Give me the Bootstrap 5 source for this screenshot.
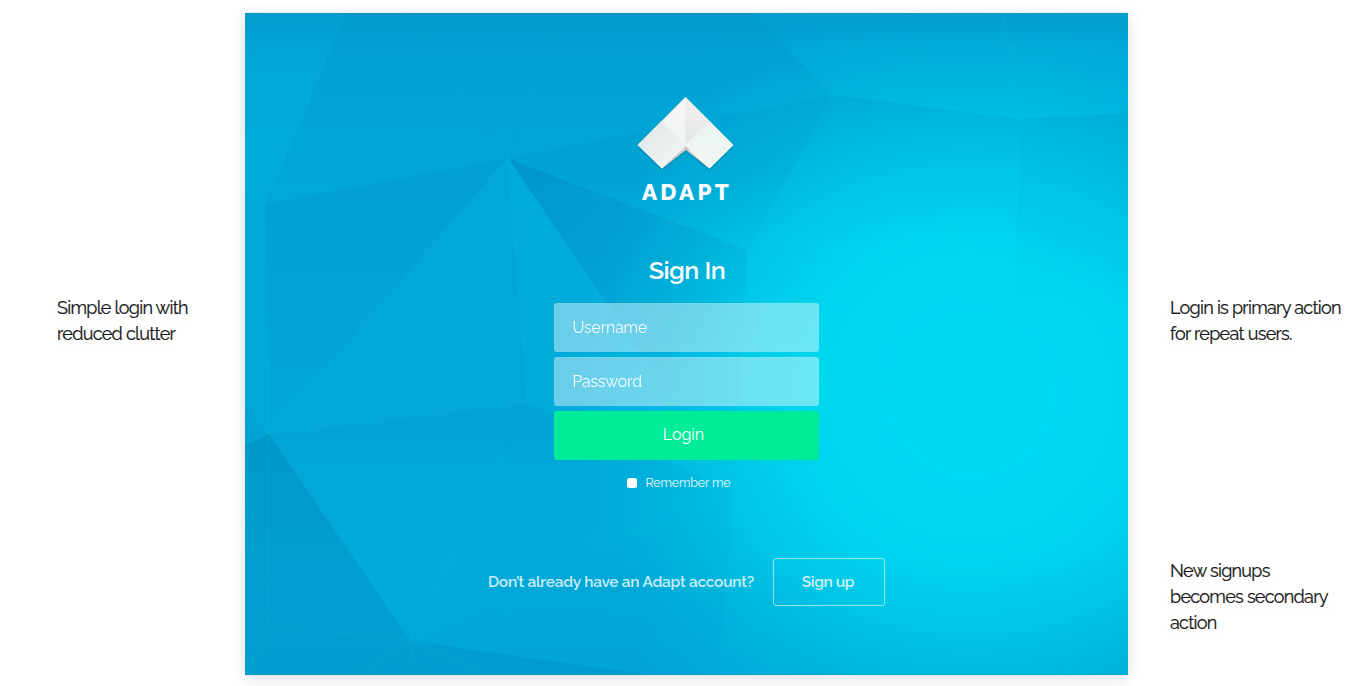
<!DOCTYPE html>
<html lang="en">
<head>
<meta charset="utf-8">
<meta name="viewport" content="width=device-width, initial-scale=1">
<title>Adapt – Sign In</title>
<link href="https://cdn.jsdelivr.net/npm/bootstrap@5.3.0/dist/css/bootstrap.min.css" rel="stylesheet">
<style>
body{font-family:Raleway,Lato,sans-serif;background:#fff;color:#161616;height:686px;overflow:hidden}
.stage{padding-top:13px}
.note{font-size:18px;line-height:26px;letter-spacing:-.71px;-webkit-text-stroke:.2px #161616;text-shadow:0 6px 14px rgba(0,0,0,.08)}
.note-left{width:245px;padding:282px 0 0 57px}
.note-right{width:243px;padding:282px 0 0 42px}
.note-right p + p{margin-top:211px}
.screen{width:883px;height:662px;background:#00a8da;box-shadow:0 3px 14px rgba(0,0,0,.13);color:#fff}
.backdrop{left:0;top:0;width:883px;height:662px;z-index:0}
.panel{width:265px;margin:83px 1px 0 0}
.logo{width:104px;height:82px}
.brand{font-size:22.5px;font-weight:800;line-height:26px;letter-spacing:3.3px;margin:1px -2px 0 0}
.panel h1{font-size:25px;font-weight:600;line-height:30px;margin:50px 0 18px 2px;letter-spacing:-.5px}
.panel .form-control{height:49px;margin-bottom:5px;padding:0 18px 1px;border:1px solid rgba(255,255,255,.06);border-radius:3px;background:rgba(255,255,255,.42);color:#fff;font-size:15.8px;letter-spacing:-.15px}
.panel .form-control::placeholder{color:#fff;opacity:.92}
.btn-login{height:49px;border:0;border-radius:3px;background:#00ec98;color:#fff;font-size:16px;padding:0 5px 2px 0}
.remember{font-size:12.5px;line-height:16px;margin-top:15px;padding-right:14px;letter-spacing:-.15px;color:rgba(255,255,255,.95)}
.remember .form-check-input{width:10px;height:10px;margin:0 8px 0 0;border:0;border-radius:2.5px;background:#fff}
.signup{margin-top:67px;font-size:15.5px;font-weight:600;letter-spacing:-.25px;color:rgba(255,255,255,.8)}
.btn-signup{width:112px;height:48px;border:1px solid rgba(255,255,255,.55);border-radius:3px;color:rgba(255,255,255,.82);font-size:15.5px;font-weight:600;letter-spacing:-.4px;padding:0 2px 0 0;margin-left:19px}
</style>
</head>
<body>
<main class="stage d-flex align-items-start">
  <aside class="note note-left flex-shrink-0"><p class="mb-0">Simple login with<br>reduced clutter</p></aside>

  <section class="screen position-relative flex-shrink-0 d-flex flex-column align-items-center">
    <svg class="backdrop position-absolute" viewBox="245 13 883 662" aria-hidden="true">
      <defs>
        <radialGradient id="glow" gradientUnits="userSpaceOnUse" cx="970" cy="395" r="440">
          <stop offset="0" stop-color="#00dbf2"/><stop offset=".32" stop-color="#00d8f0"/>
          <stop offset=".5" stop-color="#00cdea"/><stop offset=".7" stop-color="#00b9e0"/>
          <stop offset=".9" stop-color="#00abda"/><stop offset="1" stop-color="#00aada"/>
        </radialGradient>
        <linearGradient id="fall" x1="0" y1="0" x2="0" y2="1">
          <stop offset="0" stop-color="#0080b4" stop-opacity=".32"/><stop offset="1" stop-color="#0080b4" stop-opacity=".06"/>
        </linearGradient>
        <linearGradient id="soft" x1="0" y1="0" x2="0" y2="1">
          <stop offset="0" stop-color="#0088bc" stop-opacity=".17"/><stop offset=".7" stop-color="#0088bc" stop-opacity="0"/>
        </linearGradient>
        <linearGradient id="west" x1="0" y1="0" x2="0" y2="1">
          <stop offset="0" stop-color="#0088bc" stop-opacity=".3"/><stop offset=".5" stop-color="#0088bc" stop-opacity=".17"/><stop offset="1" stop-color="#0088bc" stop-opacity=".1"/>
        </linearGradient>
        <linearGradient id="north" gradientUnits="userSpaceOnUse" x1="0" y1="13" x2="0" y2="204">
          <stop offset="0" stop-color="#0088bc" stop-opacity=".18"/><stop offset="1" stop-color="#0088bc" stop-opacity=".1"/>
        </linearGradient>
        <linearGradient id="ridge" x1="0" y1="0" x2="0" y2="1">
          <stop offset="0" stop-color="#0080b4" stop-opacity=".22"/><stop offset=".5" stop-color="#0080b4" stop-opacity=".18"/><stop offset="1" stop-color="#0080b4" stop-opacity="0"/>
        </linearGradient>
        <linearGradient id="faint" x1="0" y1="0" x2="0" y2="1">
          <stop offset="0" stop-color="#008cc0" stop-opacity=".2"/><stop offset=".7" stop-color="#008cc0" stop-opacity="0"/>
        </linearGradient>
        <linearGradient id="roof" x1="0" y1="0" x2="0" y2="1">
          <stop offset="0" stop-color="#0086b8" stop-opacity=".4"/><stop offset=".3" stop-color="#0086b8" stop-opacity=".13"/><stop offset="1" stop-color="#0086b8" stop-opacity="0"/>
        </linearGradient>
        <linearGradient id="floor" x1="0" y1="0" x2="0" y2="1">
          <stop offset="0" stop-color="#0092c0" stop-opacity="0"/><stop offset="1" stop-color="#0092c0" stop-opacity=".13"/>
        </linearGradient>
        <linearGradient id="wedge" gradientUnits="userSpaceOnUse" x1="515" y1="160" x2="705" y2="370">
          <stop offset="0" stop-color="#0080b8" stop-opacity=".46"/><stop offset=".55" stop-color="#0080b8" stop-opacity=".22"/><stop offset="1" stop-color="#0080b8" stop-opacity=".02"/>
        </linearGradient>
      </defs>
      <rect x="245" y="13" width="883" height="662" fill="url(#glow)"/>
      <rect x="245" y="13" width="883" height="120" fill="url(#roof)"/>
      <rect x="245" y="555" width="883" height="120" fill="url(#floor)"/>
      <path d="M345 13H557L508 158 265 204Z" fill="url(#north)"/>
      <path d="M557 13H754L834 95 508 158Z" fill="url(#north)"/>
      <path d="M508 158 834 95 748 250Z" fill="url(#ridge)"/>
      <path d="M834 95 1020 119 1013 308Z" fill="url(#faint)"/>
      <path d="M834 95 1013 308 748 250Z" fill="url(#faint)"/>
      <path d="M1020 119 1128 113V390L1013 308Z" fill="url(#faint)"/>
      <path d="M265 204 508 158 269 434Z" fill="url(#west)"/>
      <path d="M508 158 528 402 269 434Z" fill="#0088bc" fill-opacity=".08"/>
      <path d="M508 158 748 250 735 491Z" fill="url(#wedge)"/>
      <path d="M245 198 265 204 269 434 245 406Z" fill="#0088bc" fill-opacity=".05"/>
      <path d="M269 434 528 402 410 641Z" fill="url(#soft)"/>
      <path d="M528 402 735 491 410 641Z" fill="url(#soft)"/>
      <path d="M245 406 269 434 410 641 269 624 245 621Z" fill="#0085b8" fill-opacity=".18"/>
      <path d="M245 445 269 434 410 641 245 621Z" fill="url(#fall)"/>
      <path d="M245 621 410 641 650 675H245Z" fill="#0083b8" fill-opacity=".3"/>
      <path d="M735 491 718 675H650L410 641Z" fill="#0088bc" fill-opacity=".06"/>
      <g fill="none" stroke="#4cd8f5" stroke-opacity=".1" stroke-width="1">
        <path d="M404 13 508 158 557 13M345 13 265 204 269 434M508 158 269 434M508 158 528 402 410 641M508 158 748 250 1013 308"/>
        <path d="M754 13 834 95 866 13M1003 13 1020 119 1013 308M748 250 834 95 1013 308M748 250 735 491"/>
        <path d="M245 420 269 434V624L250 675M245 621 269 624 410 641M358 675 410 641 418 675M410 641 487 675M269 434 528 402"/>
        <path d="M1013 308 735 491M1128 200 1013 308 1128 400M1013 308 1068 590 1065 675"/>
      </g>
      <path d="M245 13.500H1128" stroke="#0086ad" stroke-opacity=".35"/>
      <path d="M245 674.500H1128" stroke="#0086ad" stroke-opacity=".25"/>
    </svg>

    <div class="panel position-relative d-flex flex-column align-items-center">
      <svg class="logo" viewBox="634 96 104 82" role="img" aria-label="Adapt logo">
        <defs>
          <linearGradient id="lw" x1="0" y1="0" x2="1" y2="1"><stop offset="0" stop-color="#dde7e6"/><stop offset="1" stop-color="#f4f6f6"/></linearGradient>
          <linearGradient id="rw" x1="0" y1="0" x2="0" y2="1"><stop offset="0" stop-color="#e9f3ed"/><stop offset="1" stop-color="#f2f7f3"/></linearGradient>
          <linearGradient id="rt" x1="0" y1="0" x2="0" y2="1"><stop offset="0" stop-color="#f0f0f0"/><stop offset="1" stop-color="#e4e5e5"/></linearGradient>
          <filter id="drop" x="-10%" y="-10%" width="125%" height="130%"><feDropShadow dx="0" dy="1.200" stdDeviation="1.200" flood-color="#004a68" flood-opacity=".4"/></filter>
        </defs>
        <g filter="url(#drop)">
          <path d="M685.500 97 733.300 145 709.500 168.500 686 149 662 168.500 637.700 145Z" fill="#f3f4f4"/>
          <path d="M662 168.500 686 147.500 709.500 168.500 686 150Z" fill="#d0cdca"/>
        </g>
        <path d="M661.500 121 685.500 145 684 148 662 168.500 637.700 145Z" fill="url(#lw)"/>
        <path d="M685.500 97 709.500 121 685.500 145Z" fill="url(#rt)"/>
        <path d="M709.500 121 733.300 145 709.500 168.500 685.500 145Z" fill="url(#rw)"/>
        <path d="M663 167.500 686 147 689 149.500" fill="none" stroke="#aaa6a2" stroke-width=".6"/>
      </svg>
      <div class="brand">ADAPT</div>
      <h1>Sign In</h1>
      <form class="w-100">
        <input class="form-control" type="text" placeholder="Username" aria-label="Username">
        <input class="form-control" type="password" placeholder="Password" aria-label="Password">
        <button class="btn btn-login w-100 d-block" type="button">Login</button>
        <label class="remember d-flex justify-content-center align-items-center"><input class="form-check-input" type="checkbox">Remember me</label>
      </form>
    </div>

    <div class="signup position-relative d-flex align-items-center">
      <span>Don’t already have an Adapt account?</span>
      <button class="btn btn-signup" type="button">Sign up</button>
    </div>
  </section>

  <aside class="note note-right flex-shrink-0">
    <p class="mb-0">Login is primary action<br>for repeat users.</p>
    <p class="mb-0">New signups<br>becomes secondary<br>action</p>
  </aside>
</main>
<script src="https://cdn.jsdelivr.net/npm/bootstrap@5.3.0/dist/js/bootstrap.bundle.min.js"></script>
</body>
</html>
